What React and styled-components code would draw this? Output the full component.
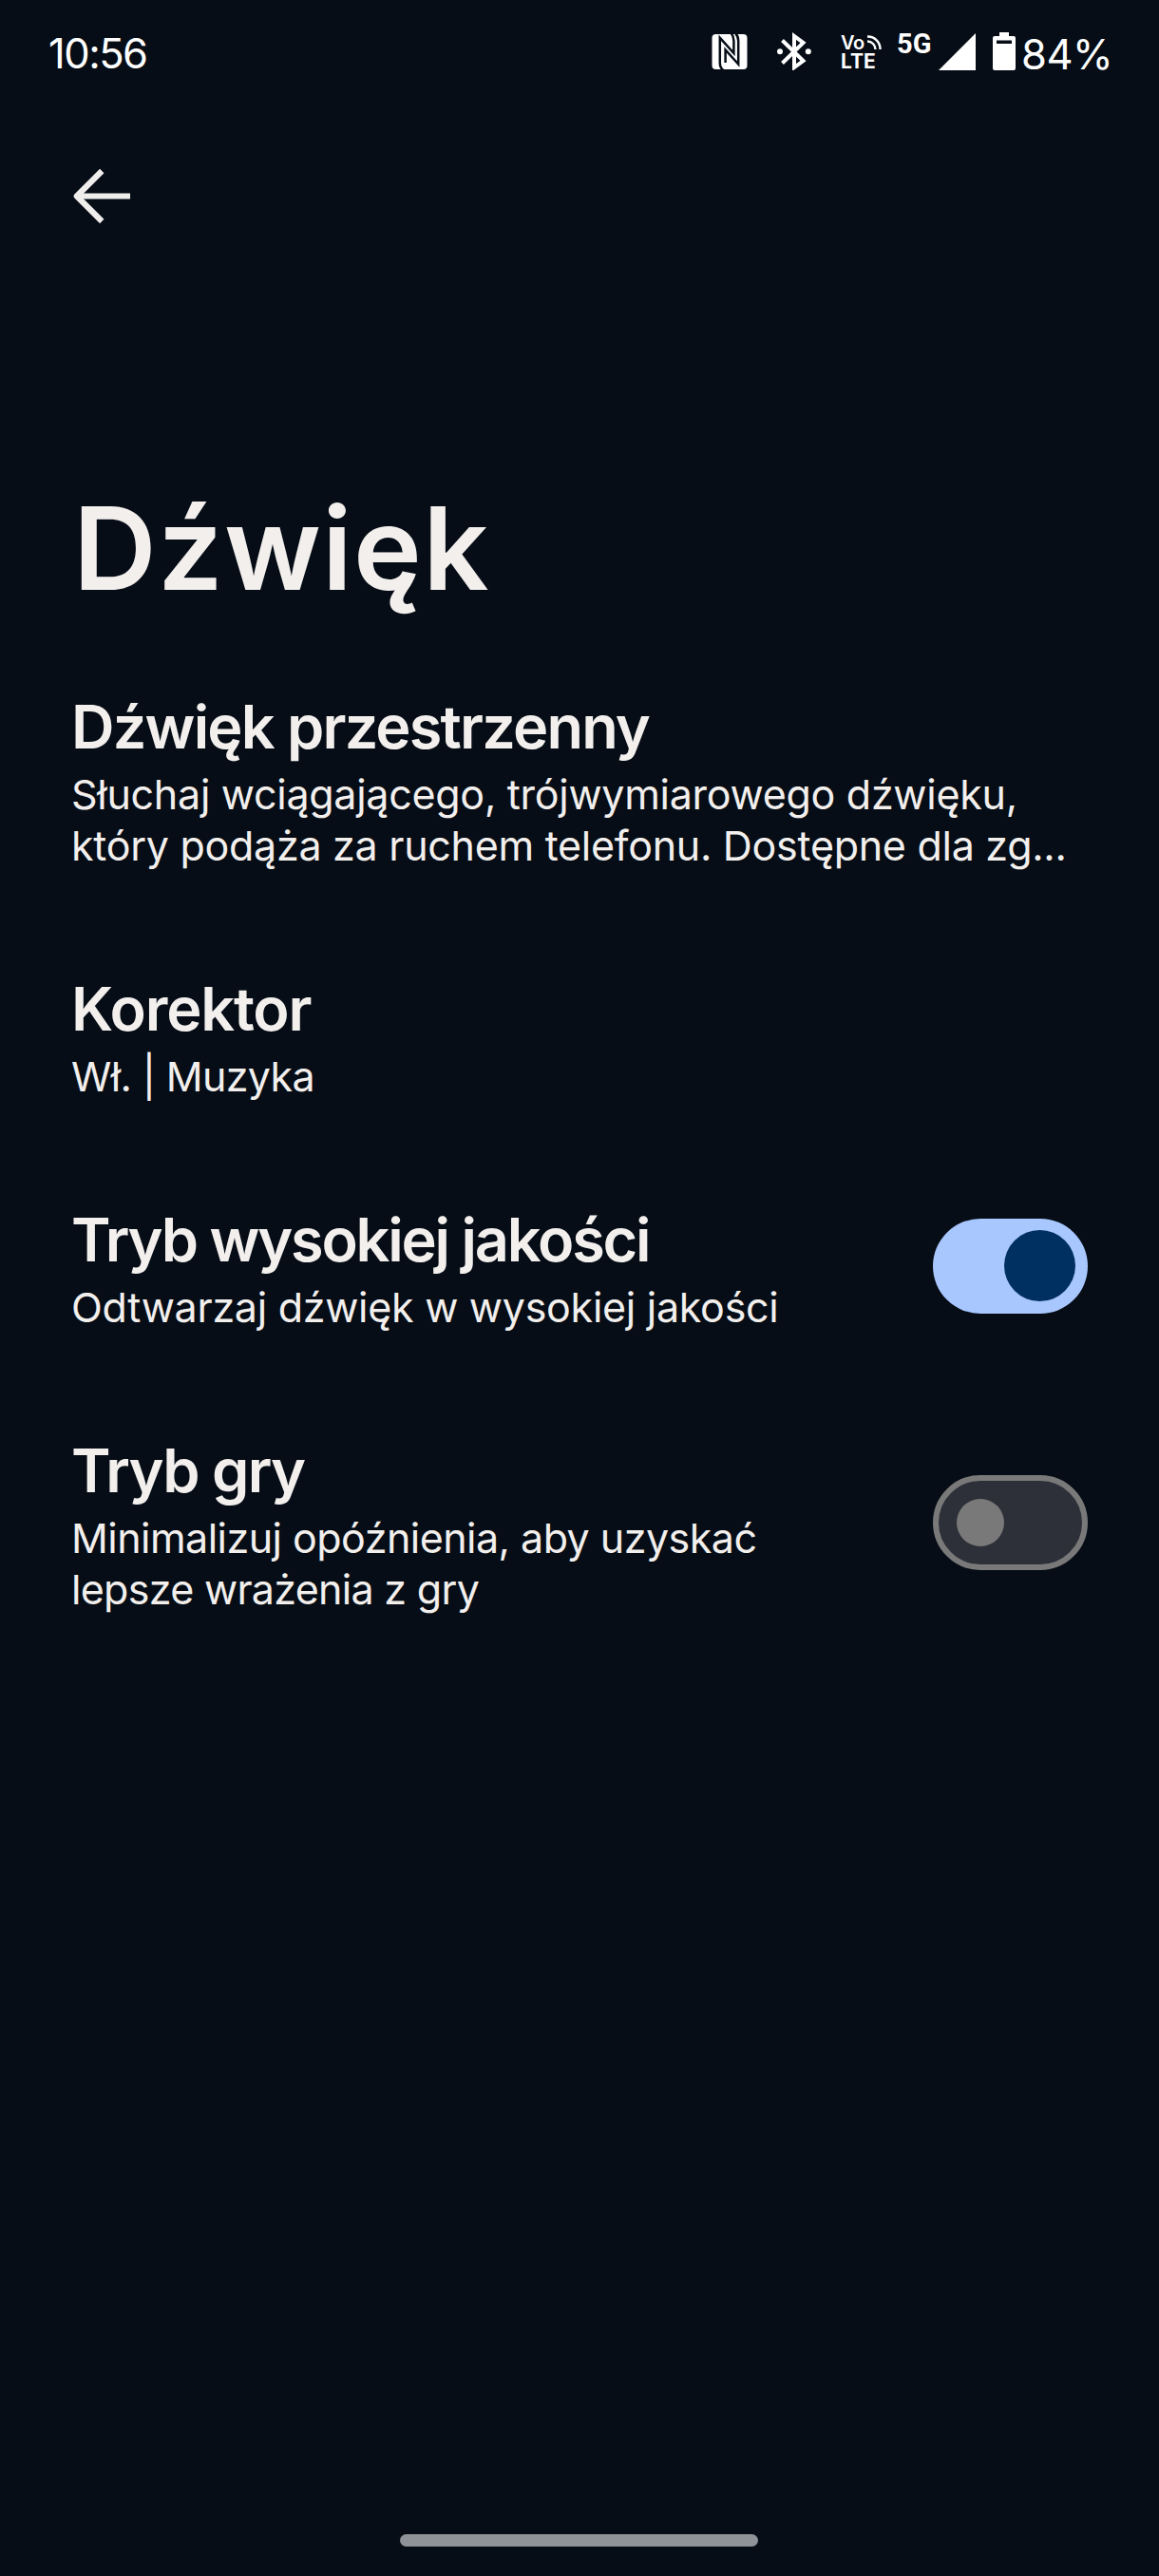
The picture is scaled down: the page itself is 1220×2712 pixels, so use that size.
import React from 'react';
import styled, { createGlobalStyle } from 'styled-components';

const GlobalStyle = createGlobalStyle`
  body {
    margin: 0;
    background-color: #060d16;
  }
`
const Screen = styled.div`
  display: flex;
  flex-direction: column;
  box-sizing: border-box;
  width: 1220px;
  height: 2712px;
  background-color: #060d16;
  color: #f2efed;
  font-family: Inter, "Open Sans", sans-serif;
  white-space: nowrap;
  overflow: hidden;
`
const StatusBar = styled.div`
  display: flex;
  align-items: flex-start;
  justify-content: space-between;
  height: 170px;
  padding: 34px 53px 0 51px;
  box-sizing: border-box;
  color: #fff;
`
const Clock = styled.span`
  margin-top: -4px;
  font-size: 43.5px;
  line-height: 52px;
  letter-spacing: -1.5px;
`
const StatusIcons = styled.div`
  display: flex;
  align-items: flex-start;
`
const StatusIcon = styled.svg`
  display: block;
  width: ${props => props.$width}px;
  height: 40px;
  margin-right: ${props => props.$gap}px;
`
const VoLte = styled.div`
  display: flex;
  flex-direction: column;
  width: 44px;
  height: 40px;
  margin-right: 15px;
`
const VoRow = styled.div`
  display: flex;
  height: 21px;
`
const VoText = styled.span`
  width: 26px;
  font: 600 20px/22px Inter, sans-serif;
  letter-spacing: -0.5px;
`
const LteText = styled.span`
  font: 700 21px/19px Inter, sans-serif;
`
const NetworkText = styled.span`
  width: 44px;
  font: 700 29px/24px Roboto, sans-serif;
`
const BatteryText = styled.span`
  width: 92px;
  margin-top: -1px;
  font: 400 43.5px/48px Inter, sans-serif;
  letter-spacing: -0.5px;
`
const TopBar = styled.div`
  height: 333px;
  padding: 7px 0 0 77px;
  box-sizing: border-box;
`
const BackButton = styled.button`
  display: block;
  padding: 0;
  border: 0;
  background: none;
  color: inherit;

  svg {
    display: block;
  }
`
const PageTitle = styled.h1`
  height: 168px;
  margin: 0;
  padding: 0 77px;
  font-size: 121.5px;
  font-weight: 600;
  line-height: 147px;
  letter-spacing: 1.2px;
`
const Row = styled.div`
  display: flex;
  align-items: center;
  justify-content: space-between;
  padding: 51px 75px;
`
const RowTitle = styled.div`
  font-size: 63px;
  font-weight: 600;
  line-height: 87px;
  letter-spacing: ${props => props.$track}px;
`
const RowLine = styled.div`
  font-size: 43px;
  line-height: 54px;
  letter-spacing: ${props => props.$track}px;
`
const Track = styled.div`
  display: flex;
  align-items: center;
  justify-content: ${props => (props.$on ? 'flex-end' : 'flex-start')};
  width: 163px;
  height: 100px;
  padding: ${props => (props.$on ? '0 13px' : '0 19px')};
  border: ${props => (props.$on ? '0' : '6px solid #797979')};
  border-radius: 50px;
  box-sizing: border-box;
  background-color: ${props => (props.$on ? '#a8c7ff' : '#2d3038')};
`
const Knob = styled.div`
  width: ${props => (props.$on ? 75 : 50)}px;
  height: ${props => (props.$on ? 75 : 50)}px;
  border-radius: 50%;
  background-color: ${props => (props.$on ? '#003062' : '#797979')};
`
const HomeArea = styled.div`
  display: flex;
  justify-content: center;
  margin-top: auto;
  padding: 0 1px 31px 0;
`
const HomeBar = styled.div`
  width: 377px;
  height: 13px;
  border-radius: 7px;
  background-color: #8f9297;
`

// track = letter spacing in px
const rows = [
  {
    title: 'Dźwięk przestrzenny',
    track: -1.8,
    lines: [
      { text: 'Słuchaj wciągającego, trójwymiarowego dźwięku,', track: -0.28 },
      { text: 'który podąża za ruchem telefonu. Dostępne dla zg...', track: -0.28 },
    ],
  },
  {
    title: 'Korektor',
    track: -1.2,
    lines: [{ text: 'Wł. | Muzyka', track: -0.65 }],
  },
  {
    title: 'Tryb wysokiej jakości',
    track: -2.2,
    lines: [{ text: 'Odtwarzaj dźwięk w wysokiej jakości', track: -0.28 }],
    on: true,
  },
  {
    title: 'Tryb gry',
    track: -1.7,
    lines: [
      { text: 'Minimalizuj opóźnienia, aby uzyskać', track: -0.53 },
      { text: 'lepsze wrażenia z gry', track: -0.7 },
    ],
    on: false,
  },
];

const Switch = ({ on }) => (
  <Track $on={on} role="switch" aria-checked={on}>
    <Knob $on={on} />
  </Track>
)

const App = () => {
  return (
    <Screen>
      <GlobalStyle />
      <StatusBar>
        <Clock>10:56</Clock>
        <StatusIcons>
          {/* nfc */}
          <StatusIcon $width={38} $gap={31} viewBox="0 0 38 40">
            <rect x="0.5" y="2" width="37" height="37" rx="4" fill="#fff" />
            <path d="M12.2 39.5C9.6 38 8.8 36 8.8 32V5.8L23.4 22V9C23.4 6 23 4 21 1.5" fill="none" stroke="#060d16" strokeWidth="2.5" />
            <path d="M14.6 32V18.5L28.2 33.6V9C28.2 6 27.6 3.6 25.4 1.5" fill="none" stroke="#060d16" strokeWidth="2.5" />
          </StatusIcon>
          {/* bluetooth */}
          <StatusIcon $width={36} $gap={31} viewBox="0 0 36 40">
            <path d="M5.5 8.5L27.5 30L18 37V4L27.5 11L5.5 32.5" fill="none" stroke="#fff" strokeWidth="4" />
            <circle cx="3" cy="20.3" r="3" fill="#fff" />
            <circle cx="32.8" cy="20.3" r="3" fill="#fff" />
          </StatusIcon>
          <VoLte>
            <VoRow>
              <VoText>Vo</VoText>
              <svg width="18" height="20" viewBox="0 0 18 20" fill="none" stroke="#fff" strokeWidth="2.4">
                <path d="M2 4.5A13 13 0 0 1 15.5 18" />
                <path d="M2 9.5A8.5 8.5 0 0 1 10.5 18" />
              </svg>
            </VoRow>
            <LteText>LTE</LteText>
          </VoLte>
          <NetworkText>5G</NetworkText>
          <StatusIcon $width={39} $gap={18} viewBox="0 0 39 40">
            <path d="M39 1V40H0Z" fill="#fff" />
          </StatusIcon>
          <StatusIcon $width={24} $gap={6} viewBox="0 0 24 40">
            <path d="M7 0H17V4H22Q24 4 24 6V38Q24 40 22 40H2Q0 40 0 38V6Q0 4 2 4H7ZM4 8.5V12H20V8.5Z" fill="#fff" fillRule="evenodd" />
          </StatusIcon>
          <BatteryText>84%</BatteryText>
        </StatusIcons>
      </StatusBar>
      <TopBar>
        <BackButton aria-label="Wstecz">
          <svg width="62" height="60" viewBox="0 0 62 60" fill="none" stroke="#f0eeec" strokeWidth="6.2">
            <path d="M30.3 3L3.8 29.5L30.3 56" strokeLinejoin="round" />
            <path d="M4 29.5H60" />
          </svg>
        </BackButton>
      </TopBar>
      <PageTitle>Dźwięk</PageTitle>
      {rows.map(row => (
        <Row key={row.title}>
          <div>
            <RowTitle $track={row.track}>{row.title}</RowTitle>
            {row.lines.map(line => (
              <RowLine key={line.text} $track={line.track}>{line.text}</RowLine>
            ))}
          </div>
          {row.on !== undefined && <Switch on={row.on} />}
        </Row>
      ))}
      <HomeArea>
        <HomeBar />
      </HomeArea>
    </Screen>
  )
}

export default App;
